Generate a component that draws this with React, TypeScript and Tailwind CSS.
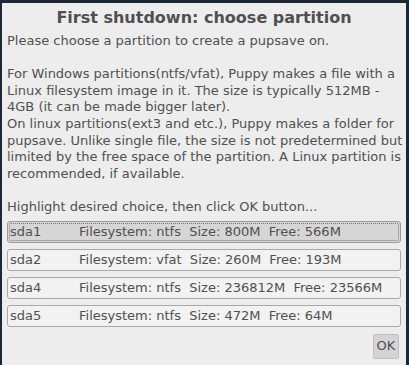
export default function App() {
  const parts = [
    { dev: "sda1", fs: "ntfs", size: "800M", free: "566M" },
    { dev: "sda2", fs: "vfat", size: "260M", free: "193M" },
    { dev: "sda4", fs: "ntfs", size: "236812M", free: "23566M" },
    { dev: "sda5", fs: "ntfs", size: "472M", free: "64M" },
  ];

  return (
    <div className="w-[409px] h-[365px] overflow-hidden bg-[#1c2836] pt-[3px] pl-[2px]">
      <div className="w-[404px] h-[362px] bg-[#ededed] text-[#505050] font-['DejaVu_Sans',sans-serif]">
        {/* title */}
        <h1 className="pt-[5px] text-center text-[16px] font-bold leading-[20px]">
          First shutdown: choose partition
        </h1>

        {/* explanation */}
        <div className="pl-[5px] pt-[5px] text-[13px] leading-[16.6px] whitespace-nowrap">
          <p>Please choose a partition to create a pupsave on.</p>
          <p>&nbsp;</p>
          <p>For Windows partitions(ntfs/vfat), Puppy makes a file with a</p>
          <p>Linux filesystem image in it. The size is typically 512MB -</p>
          <p>4GB (it can be made bigger later).</p>
          <p>On linux partitions(ext3 and etc.), Puppy makes a folder for</p>
          <p>pupsave. Unlike single file, the size is not predetermined but</p>
          <p>limited by the free space of the partition. A Linux partition is</p>
          <p>recommended, if available.</p>
          <p>&nbsp;</p>
          <p>Highlight desired choice, then click OK button...</p>
        </div>

        {/* partition list */}
        <div className="mt-[5px] flex flex-col gap-[6px] px-[5px]">
          {parts.map((p, i) => (
            <div
              key={p.dev}
              className={
                i === 0
                  ? "h-[22px] rounded-[3px] border border-[#9a9a9a] bg-[#d6d6d6] p-[1px]"
                  : "h-[22px] rounded-[3px] border border-[#a8a8a8] bg-[#f2f2f2] p-[1px]"
              }
            >
              <div
                className={
                  i === 0
                    ? "flex h-full items-center border border-dotted border-[#7a7a7a] rounded-[2px] text-[13px] whitespace-nowrap"
                    : "flex h-full items-center border border-transparent text-[13px] whitespace-nowrap"
                }
              >
                <span className="w-[69px]">{p.dev}</span>
                <span>
                  Filesystem: {p.fs}&nbsp;&nbsp;Size: {p.size}&nbsp;&nbsp;Free: {p.free}
                </span>
              </div>
            </div>
          ))}
        </div>

        {/* OK */}
        <div className="flex justify-end pr-[7px] pt-[7px]">
          <button className="h-[25px] w-[26px] rounded-[2px] border border-[#c0c0c0] bg-[#d4d4d4] text-[13px] text-[#505050]">
            OK
          </button>
        </div>
      </div>
    </div>
  );
}
